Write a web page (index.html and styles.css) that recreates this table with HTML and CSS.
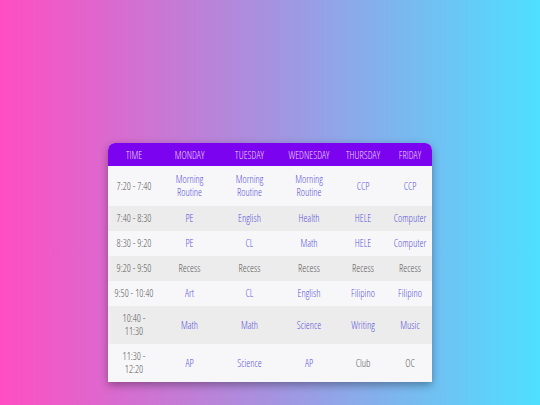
FILE: index.html
```html
<!DOCTYPE html>
<html>
<head>
<meta charset="utf-8">
<link rel="stylesheet" href="styles.css">
</head>
<body>
<main class="page">
  <table class="schedule">
    <colgroup>
      <col class="c-time"><col class="c-mon"><col class="c-tue"><col class="c-wed"><col class="c-thu"><col class="c-fri">
    </colgroup>
    <thead>
      <tr><th>Time</th><th>Monday</th><th>Tuesday</th><th>Wednesday</th><th>Thursday</th><th>Friday</th></tr>
    </thead>
    <tbody>
      <tr class="tall"><td class="t">7:20 - 7:40</td><td>Morning Routine</td><td>Morning Routine</td><td>Morning Routine</td><td>CCP</td><td>CCP</td></tr>
      <tr><td class="t">7:40 - 8:30</td><td>PE</td><td>English</td><td>Health</td><td>HELE</td><td>Computer</td></tr>
      <tr><td class="t">8:30 - 9:20</td><td>PE</td><td>CL</td><td>Math</td><td>HELE</td><td>Computer</td></tr>
      <tr class="plain"><td class="t">9:20 - 9:50</td><td>Recess</td><td>Recess</td><td>Recess</td><td>Recess</td><td>Recess</td></tr>
      <tr><td class="t">9:50 - 10:40</td><td>Art</td><td>CL</td><td>English</td><td>Filipino</td><td>Filipino</td></tr>
      <tr class="tall"><td class="t">10:40 - 11:30</td><td>Math</td><td>Math</td><td>Science</td><td>Writing</td><td>Music</td></tr>
      <tr class="tall"><td class="t">11:30 - 12:20</td><td>AP</td><td>Science</td><td>AP</td><td class="g">Club</td><td class="g">OC</td></tr>
    </tbody>
  </table>
</main>
</body>
</html>
```
FILE: styles.css
```css
html, body {
  margin: 0;
  height: 100%;
}
body {
  background: linear-gradient(to right, #ff4ec2, #a692e0 50%, #4edfff);
  font-family: "Open Sans", "Liberation Sans", sans-serif;
  font-stretch: 75%;
  font-weight: 300;
}
.page {
  display: flex;
  justify-content: center;
  padding-top: 143px;
}
.schedule {
  width: 324px;
  table-layout: fixed;
  border-collapse: separate;
  border-spacing: 0;
  background: #f8f8fa;
  border-radius: 7px 7px 0 0;
  overflow: hidden;
  box-shadow: 0 3px 8px rgba(0, 0, 0, 0.35);
}
.c-time { width: 52px; }
.c-mon { width: 59px; }
.c-tue { width: 61px; }
.c-wed { width: 58px; }
.c-thu { width: 50px; }
.c-fri { width: 44px; }
thead th {
  background: #7c03ef;
  color: #e6dbff;
  font-weight: 300;
  font-size: 10px;
  text-transform: uppercase;
  height: 23px;
  padding: 0;
}
tbody td {
  text-align: center;
  font-size: 10px;
  line-height: 13px;
  color: #5a54d8;
  height: 25px;
  padding: 0 6px;
}
tbody td:last-child { padding: 0 2px; }
tbody td.t { padding: 0 5px; }
tbody tr:nth-child(odd) td { background: #f7f7f9; }
tbody tr:nth-child(even) td { background: #ececec; }
tbody tr.tall td { height: 38px; }
tbody tr:first-child td { height: 40px; }
tbody td.t, tbody tr.plain td, tbody td.g { color: #5a5a5a; }
```
